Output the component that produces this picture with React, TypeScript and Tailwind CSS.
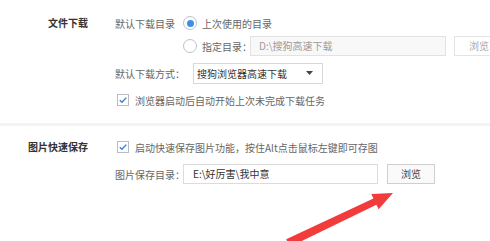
import { FC } from "react"

const Radio: FC<{ checked?: boolean }> = ({ checked }) => (
  <span className="w-[14px] h-[14px] rounded-full border border-[#b9c3d0] bg-white flex items-center justify-center shrink-0">
    {checked && <span className="w-[7px] h-[7px] rounded-full bg-[#3f8ee6]" />}
  </span>
)

const Check: FC = () => (
  <span className="w-[12px] h-[12px] border border-[#b8bcc4] bg-white flex items-center justify-center shrink-0">
    <svg width="10" height="10" viewBox="0 0 10 10">
      <path d="M1.8 5.2 L4 7.3 L8.3 2.6" fill="none" stroke="#3a7fd8" strokeWidth="1.4" />
    </svg>
  </span>
)

export default function App() {
  return (
    <div className="w-[490px] h-[241px] bg-white relative overflow-hidden text-[10px] text-[#666] font-['Noto_Sans_CJK_SC','Noto_Sans',sans-serif]">
      {/* 文件下载 */}
      <div className="flex pt-[13px]">
        <div className="w-[88px] shrink-0 text-right h-5 leading-5 font-bold text-[#333]">文件下载</div>
        <div className="ml-[27px] flex flex-col">
          <div className="h-5 flex items-center">
            <span className="w-[68px] whitespace-nowrap">默认下载目录</span>
            <Radio checked />
            <span className="ml-[5px] whitespace-nowrap">上次使用的目录</span>
          </div>
          <div className="h-5 mt-[3px] flex items-center pl-[68px]">
            <Radio />
            <span className="ml-[5px] w-[48px] whitespace-nowrap">指定目录：</span>
            <div className="w-[196px] h-5 border border-[#e2e2e2] bg-[#f8f8f8] text-[#9a9a9a] pl-[8px] leading-[18px] whitespace-nowrap">D:\搜狗高速下载</div>
            <div className="ml-[8px] w-[50px] h-5 border border-[#e4e4e4] bg-white text-[#aaa] leading-[18px] text-center">浏览</div>
          </div>
          <div className="h-5 mt-[7px] flex items-center">
            <span className="w-[78px] whitespace-nowrap">默认下载方式：</span>
            <div className="w-[130px] h-[21px] border border-[#d8d8d8] bg-white text-[#333] pl-[3px] pr-[9px] flex items-center justify-between">
              <span className="whitespace-nowrap">搜狗浏览器高速下载</span>
              <svg width="7" height="4" viewBox="0 0 7 4">
                <path d="M0 0 L7 0 L3.5 4 Z" fill="#444" />
              </svg>
            </div>
          </div>
          <div className="h-5 mt-[7px] flex items-center pl-[2px]">
            <Check />
            <span className="ml-[6px] whitespace-nowrap">浏览器启动后自动开始上次未完成下载任务</span>
          </div>
        </div>
      </div>

      <div className="mt-[13px] h-[3px] bg-[#f3f3f3]" />

      {/* 图片快速保存 */}
      <div className="flex mt-[11px]">
        <div className="w-[88px] shrink-0 text-right h-5 leading-5 font-bold text-[#333]">图片快速保存</div>
        <div className="ml-[27px] flex flex-col">
          <div className="h-5 flex items-center pl-[2px]">
            <Check />
            <span className="ml-[6px] whitespace-nowrap">启动快速保存图片功能，按住Alt点击鼠标左键即可存图</span>
          </div>
          <div className="h-5 mt-[7px] flex items-center">
            <span className="w-[68px] whitespace-nowrap">图片保存目录：</span>
            <div className="w-[195px] h-5 border border-[#dcdcdc] bg-white text-[#333] pl-[9px] leading-[18px] whitespace-nowrap">E:\好厉害\我中意</div>
            <div className="ml-[9px] w-[48px] h-5 border border-[#cfcfcf] bg-[#fafafa] text-[#444] leading-[18px] text-center">浏览</div>
          </div>
        </div>
      </div>

      <svg className="absolute left-0 top-0" width="490" height="241" viewBox="0 0 490 241">
        <polygon
          points="289.8,246.8 376.4,204.8 378.6,209.3 393,193 371.3,193.9 373.4,198.4 286.2,239.2"
          fill="#f23b3b"
        />
      </svg>
    </div>
  )
}
